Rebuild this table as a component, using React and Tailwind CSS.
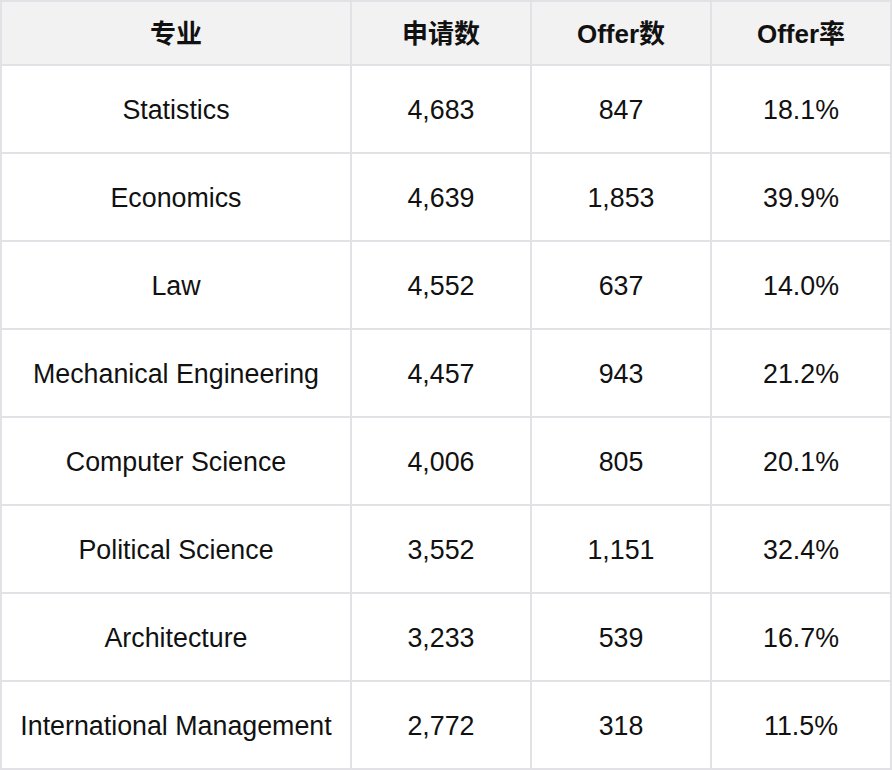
const rows = [
  ['Statistics', '4,683', '847', '18.1%'],
  ['Economics', '4,639', '1,853', '39.9%'],
  ['Law', '4,552', '637', '14.0%'],
  ['Mechanical Engineering', '4,457', '943', '21.2%'],
  ['Computer Science', '4,006', '805', '20.1%'],
  ['Political Science', '3,552', '1,151', '32.4%'],
  ['Architecture', '3,233', '539', '16.7%'],
  ['International Management', '2,772', '318', '11.5%'],
];

const headers = ['专业', '申请数', 'Offer数', 'Offer率'];

function App() {
  return (
    <div
      className="w-[892px] bg-white text-[#111]"
      style={{ fontFamily: '"Liberation Sans", "Noto Sans CJK SC", Arial, sans-serif' }}
    >
      <div className="grid grid-cols-[348px_178px_178px_178px] gap-[2px] p-[2px] bg-[#e1e1e6]">
        {headers.map((h) => (
          <div
            key={h}
            className="h-[62px] pt-[2px] flex items-center justify-center bg-[#f2f2f2] text-[26px] font-bold"
          >
            {h}
          </div>
        ))}
        {rows.map((row) =>
          row.map((cell, i) => (
            <div
              key={row[0] + i}
              className="h-[86px] pt-[3px] flex items-center justify-center bg-white text-[26.8px]"
            >
              {cell}
            </div>
          ))
        )}
      </div>
    </div>
  );
}

export default App;
